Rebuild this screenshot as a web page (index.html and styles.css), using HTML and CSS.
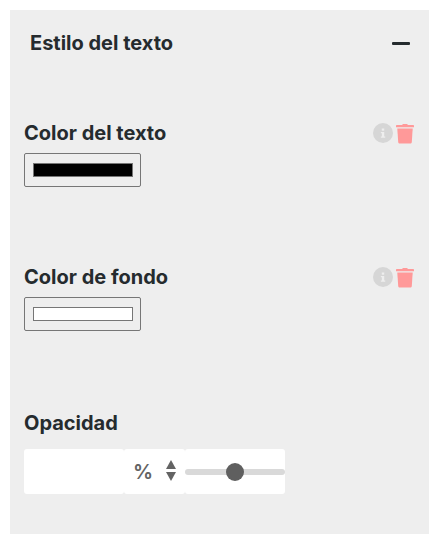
FILE: index.html
```html
<!DOCTYPE html>
<html>
<head>
    <title>Estilo del texto</title>
    <link rel="stylesheet" href="styles.css">
</head>
<body>
    <div class="panel">
        <div class="panel-header">
            <span class="panel-title">Estilo del texto</span>
            <span class="collapse-icon"></span>
        </div>

        <div class="field field-color">
            <div class="field-head">
                <label class="field-label" for="textColor">Color del texto</label>
                <div class="field-actions">
                    <svg class="info-icon" viewBox="0 0 20 20"><circle cx="10" cy="10" r="10" fill="#d6d6d6"/><rect x="8.8" y="5.5" width="2.4" height="2.2" fill="#eee"/><path d="M7.9 9h3.3v4.6h1v1.2H7.9v-1.2h1v-3.4h-1z" fill="#eee"/></svg>
                    <svg class="trash-icon" viewBox="0 0 18 20"><path d="M6.2 1.6 6.8.4h4.4l.6 1.2H17c.6 0 1 .4 1 1v1.2H0V2.6c0-.6.4-1 1-1z" fill="#ff9999"/><path d="M1.3 5h15.4l-.9 13.4c-.1.9-.8 1.6-1.7 1.6H3.9c-.9 0-1.6-.7-1.7-1.6z" fill="#ff9999"/></svg>
                </div>
            </div>
            <input type="color" id="textColor" class="color-input" value="#000000">
        </div>

        <div class="field field-color">
            <div class="field-head">
                <label class="field-label" for="bgColor">Color de fondo</label>
                <div class="field-actions">
                    <svg class="info-icon" viewBox="0 0 20 20"><circle cx="10" cy="10" r="10" fill="#d6d6d6"/><rect x="8.8" y="5.5" width="2.4" height="2.2" fill="#eee"/><path d="M7.9 9h3.3v4.6h1v1.2H7.9v-1.2h1v-3.4h-1z" fill="#eee"/></svg>
                    <svg class="trash-icon" viewBox="0 0 18 20"><path d="M6.2 1.6 6.8.4h4.4l.6 1.2H17c.6 0 1 .4 1 1v1.2H0V2.6c0-.6.4-1 1-1z" fill="#ff9999"/><path d="M1.3 5h15.4l-.9 13.4c-.1.9-.8 1.6-1.7 1.6H3.9c-.9 0-1.6-.7-1.7-1.6z" fill="#ff9999"/></svg>
                </div>
            </div>
            <input type="color" id="bgColor" class="color-input" value="#ffffff">
        </div>

        <div class="field">
            <div class="field-head">
                <label class="field-label" for="opacity">Opacidad</label>
            </div>
            <div class="opacity-row">
                <input type="text" id="opacity" class="opacity-input">
                <div class="opacity-unit">
                    <span class="unit-text">%</span>
                    <span class="unit-spinner">
                        <span class="arrow-up"></span>
                        <span class="arrow-down"></span>
                    </span>
                </div>
                <div class="opacity-slider">
                    <input type="range" class="range" min="0" max="100" value="50">
                </div>
            </div>
        </div>
    </div>
</body>
</html>
```

FILE: styles.css
```css
body {
    margin: 0;
    padding: 10px 8px 7px 10px;
    background-color: #fff;
    font-family: Inter, Arial, sans-serif;
    color: #252b2e;
}

.panel {
    background-color: #eee;
    padding: 0 14px;
    height: 524px;
    box-sizing: border-box;
}

.panel-header {
    display: flex;
    justify-content: space-between;
    align-items: center;
    height: 66px;
    padding: 0 5px 0 6px;
}

.panel-title {
    font-size: 20px;
    font-weight: 700;
}

.collapse-icon {
    width: 18px;
    height: 3px;
    border-radius: 1px;
    background-color: #252b2e;
}

.field-color {
    margin-bottom: 78px;
}

.field-color + .field-color {
    margin-bottom: 80px;
}

.field-head {
    display: flex;
    justify-content: space-between;
    align-items: center;
    height: 24px;
    margin-bottom: 8px;
}

.panel-header + .field {
    margin-top: 45px;
}

.field-label {
    font-size: 20px;
    font-weight: 700;
}

.field-actions {
    display: flex;
    align-items: center;
    gap: 3px;
    margin-right: 1px;
}

.info-icon {
    width: 20px;
    height: 20px;
}

.trash-icon {
    width: 18px;
    height: 21px;
}

.color-input {
    display: block;
    width: 117px;
    height: 34px;
    padding: 9px 7px 9px 8px;
    box-sizing: border-box;
    background-color: transparent;
    border: 1px solid #767676;
    border-radius: 2px;
}

.color-input::-webkit-color-swatch-wrapper {
    padding: 0;
}

.color-input::-webkit-color-swatch {
    border: 1px solid #767676;
}

.opacity-row {
    display: flex;
    height: 45px;
    margin-top: 14px;
}

.opacity-input {
    width: 100px;
    box-sizing: border-box;
    border: 0;
    background-color: #fff;
    border-radius: 3px;
}

.opacity-unit {
    width: 61px;
    display: flex;
    align-items: center;
    background-color: #fff;
    color: #636363;
    border-radius: 3px;
}

.unit-text {
    margin-left: 9px;
    font-size: 20px;
    font-weight: 600;
}

.unit-spinner {
    display: flex;
    flex-direction: column;
    gap: 3px;
    margin: -2px 0 0 13px;
}

.arrow-up,
.arrow-down {
    width: 0;
    height: 0;
    border-left: 5.5px solid transparent;
    border-right: 5.5px solid transparent;
}

.arrow-up {
    border-bottom: 9px solid #636363;
}

.arrow-down {
    border-top: 9px solid #636363;
}

.opacity-slider {
    width: 100px;
    display: flex;
    align-items: center;
    background-color: #fff;
    border-radius: 3px;
}

.range {
    -webkit-appearance: none;
    appearance: none;
    width: 100%;
    height: 6px;
    margin: 0;
    background-color: #d9d9d9;
    border-radius: 3px;
}

.range::-webkit-slider-thumb {
    -webkit-appearance: none;
    appearance: none;
    width: 18px;
    height: 18px;
    border-radius: 50%;
    background-color: #5f5f5f;
}
```
